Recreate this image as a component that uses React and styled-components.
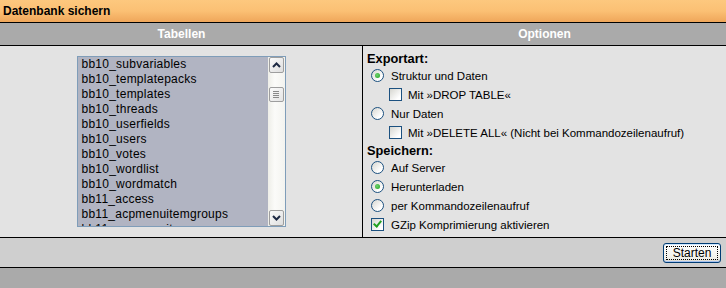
import React from "react";
import styled, { createGlobalStyle } from "styled-components";

const GlobalStyle = createGlobalStyle`
  html, body {
    margin: 0;
    padding: 0;
    background: #aaaaaa;
  }
  body {
    font-family: "Liberation Sans", Arial, sans-serif;
    color: #000;
  }
`;

const tables = [
  "bb10_subvariables",
  "bb10_templatepacks",
  "bb10_templates",
  "bb10_threads",
  "bb10_userfields",
  "bb10_users",
  "bb10_votes",
  "bb10_wordlist",
  "bb10_wordmatch",
  "bb11_access",
  "bb11_acpmenuitemgroups",
  "bb11_acpmenuitems",
  "bb11_acpmenuitemscache",
];

const App = () => {
  return (
    <Page>
      <GlobalStyle />
      <TitleBar>Datenbank sichern</TitleBar>
      <HeadRow>
        <HeadCell>Tabellen</HeadCell>
        <HeadCell>Optionen</HeadCell>
      </HeadRow>
      <Body>
        <LeftCell>
          <ListBox>
            <Items>
              {tables.map((t) => (
                <Item key={t}>{t}</Item>
              ))}
            </Items>
            <ScrollBar>
              <ScrollButton>
                <Arrow up />
              </ScrollButton>
              <Track>
                <Thumb>
                  <Grip />
                  <Grip />
                  <Grip />
                  <Grip />
                </Thumb>
              </Track>
              <ScrollButton>
                <Arrow />
              </ScrollButton>
            </ScrollBar>
          </ListBox>
        </LeftCell>
        <RightCell>
          <SectionLabel>Exportart:</SectionLabel>
          <OptionRow>
            <Radio checked />
            <span>Struktur und Daten</span>
          </OptionRow>
          <OptionRow sub>
            <Checkbox />
            <span>Mit »DROP TABLE«</span>
          </OptionRow>
          <OptionRow>
            <Radio />
            <span>Nur Daten</span>
          </OptionRow>
          <OptionRow sub>
            <Checkbox />
            <span>Mit »DELETE ALL« (Nicht bei Kommandozeilenaufruf)</span>
          </OptionRow>
          <SectionLabel>Speichern:</SectionLabel>
          <OptionRow>
            <Radio />
            <span>Auf Server</span>
          </OptionRow>
          <OptionRow>
            <Radio checked />
            <span>Herunterladen</span>
          </OptionRow>
          <OptionRow>
            <Radio />
            <span>per Kommandozeilenaufruf</span>
          </OptionRow>
          <OptionRow>
            <Checkbox checked />
            <span>GZip Komprimierung aktivieren</span>
          </OptionRow>
        </RightCell>
      </Body>
      <Footer>
        <SubmitButton>
          <FocusRect>Starten</FocusRect>
        </SubmitButton>
      </Footer>
    </Page>
  );
};

const Arrow = ({ up }) => (
  <svg width="9" height="6" viewBox="0 0 9 6">
    <polyline
      points={up ? "1,5 4.5,1.5 8,5" : "1,1 4.5,4.5 8,1"}
      fill="none"
      stroke="#1e2a44"
      strokeWidth="2"
    />
  </svg>
);

const Page = styled.div`
  width: 726px;
  display: flex;
  flex-direction: column;
`;

const TitleBar = styled.div`
  height: 23px;
  box-sizing: border-box;
  padding-left: 3px;
  display: flex;
  align-items: center;
  font-size: 12px;
  font-weight: bold;
  background: linear-gradient(#fdc87e 0%, #fbc074 50%, #efa65a 100%);
  border-bottom: 1px solid #000;
`;

const HeadRow = styled.div`
  display: grid;
  grid-template-columns: 363px 363px;
  height: 23px;
  box-sizing: border-box;
  background: #aaaaaa;
  border-bottom: 1px solid #000;
`;

const HeadCell = styled.div`
  display: flex;
  align-items: center;
  justify-content: center;
  color: #fff;
  font-weight: bold;
  font-size: 12px;
`;

const Body = styled.div`
  display: grid;
  grid-template-columns: 363px 363px;
  height: 192px;
  box-sizing: border-box;
  background: #e3e3e3;
  border-bottom: 1px solid #000;
`;

const LeftCell = styled.div`
  border-right: 1px solid #000;
  padding-top: 10px;
  display: flex;
  justify-content: center;
`;

const ListBox = styled.div`
  width: 209px;
  height: 171px;
  box-sizing: border-box;
  border: 1px solid #7f9db9;
  background: #b1b4c2;
  display: flex;
  overflow: hidden;
`;

const Items = styled.div`
  flex: 1;
  padding-left: 4px;
  overflow: hidden;
`;

const Item = styled.div`
  font-size: 12px;
  letter-spacing: 0.25px;
  line-height: 15px;
  white-space: nowrap;
`;

const ScrollBar = styled.div`
  width: 17px;
  display: flex;
  flex-direction: column;
  background: linear-gradient(to right, #eeeee8, #fbfbf9 40%, #f3f3ef);
`;

const ScrollButton = styled.div`
  height: 16px;
  margin: 0 1px;
  box-sizing: border-box;
  border: 1px solid #9e9e9e;
  border-radius: 2px;
  background: linear-gradient(135deg, #fbfbfb, #dedede);
  display: flex;
  align-items: center;
  justify-content: center;
`;

const Track = styled.div`
  flex: 1;
  padding-top: 14px;
`;

const Thumb = styled.div`
  height: 15px;
  margin: 0 1px;
  box-sizing: border-box;
  border: 1px solid #9e9e9e;
  border-radius: 2px;
  background: linear-gradient(135deg, #fbfbfb, #e4e4e4);
  display: flex;
  flex-direction: column;
  align-items: center;
  justify-content: center;
  gap: 1px;
`;

const Grip = styled.div`
  width: 6px;
  height: 1px;
  background: #8a8a8a;
`;

const RightCell = styled.div`
  padding-top: 4px;
  display: flex;
  flex-direction: column;
`;

const SectionLabel = styled.div`
  height: 16px;
  padding-left: 4px;
  display: flex;
  align-items: center;
  font-size: 12.8px;
  font-weight: bold;
`;

const OptionRow = styled.div`
  height: 19px;
  padding-left: ${(p) => (p.sub ? "26px" : "8px")};
  display: flex;
  align-items: center;
  gap: ${(p) => (p.sub ? "6px" : "7px")};
  font-size: 11.5px;
  white-space: nowrap;
`;

const Radio = styled.span`
  position: relative;
  width: 13px;
  height: 13px;
  box-sizing: border-box;
  border-radius: 50%;
  border: 1px solid #1c5180;
  background: linear-gradient(135deg, #d6d6d0, #ffffff 75%);
  flex-shrink: 0;

  &::after {
    content: "";
    display: ${(p) => (p.checked ? "block" : "none")};
    position: absolute;
    left: 3px;
    top: 3px;
    width: 5px;
    height: 5px;
    border-radius: 50%;
    background: radial-gradient(circle at 40% 40%, #6fd36f, #21a121);
  }
`;

const Checkbox = styled.span`
  position: relative;
  width: 13px;
  height: 13px;
  box-sizing: border-box;
  border: 1px solid #1c5180;
  background: linear-gradient(135deg, #d6d6d0, #ffffff 80%);
  flex-shrink: 0;

  &::after {
    content: "";
    display: ${(p) => (p.checked ? "block" : "none")};
    position: absolute;
    left: 3px;
    top: 0px;
    width: 3px;
    height: 6px;
    border-right: 2px solid #21a121;
    border-bottom: 2px solid #21a121;
    transform: rotate(40deg);
  }
`;

const Footer = styled.div`
  height: 30px;
  box-sizing: border-box;
  background: #cfcfcf;
  border-bottom: 1px solid #000;
  display: flex;
  align-items: center;
  justify-content: flex-end;
  padding-right: 5px;
`;

const SubmitButton = styled.button`
  width: 58px;
  height: 20px;
  padding: 2px;
  box-sizing: border-box;
  border: 1px solid #003c74;
  border-radius: 3px;
  background: linear-gradient(#ffffff, #f0f0ea 80%, #d6d0c5);
  box-shadow: inset 0 -1px 0 #a5c1ee, inset 0 1px 0 #cee7ff;
  font-family: "Liberation Sans", Arial, sans-serif;
  font-size: 12px;
  color: #000;
  display: flex;
`;

const FocusRect = styled.span`
  flex: 1;
  border: 1px dotted #000;
  display: flex;
  align-items: center;
  justify-content: center;
  line-height: 12px;
`;

export default App;
